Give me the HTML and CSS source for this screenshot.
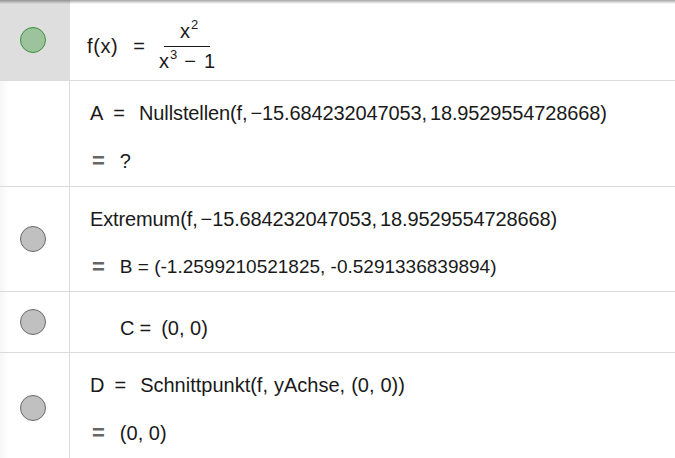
FILE: index.html
```html
<!DOCTYPE html>
<html lang="de">
<head>
<meta charset="utf-8">
<title>Algebra</title>
<link rel="stylesheet" href="styles.css">
</head>
<body>
<div class="panel">
  <div class="row row1 selected">
    <div class="marble-cell"><span class="marble green"></span></div>
    <div class="content c-func">
      <span class="m">f(x)</span><span class="eq">=</span>
      <span class="frac">
        <span class="num">x<sup>2</sup></span>
        <span class="den">x<sup>3</sup><span class="minus">−</span>1</span>
      </span>
    </div>
  </div>
  <div class="row row2">
    <div class="marble-cell"></div>
    <div class="content two">
      <div class="line"><span>A</span><span class="eq">=</span><span class="tight">Nullstellen(f,<span class="thin"></span>−15.684232047053,<span class="thin"></span>18.9529554728668)</span></div>
      <div class="line"><span class="out-eq">=</span><span>?</span></div>
    </div>
  </div>
  <div class="row row3">
    <div class="marble-cell"><span class="marble gray"></span></div>
    <div class="content two">
      <div class="line"><span class="tight">Extremum(f,<span class="thin"></span>−15.684232047053,<span class="thin"></span>18.9529554728668)</span></div>
      <div class="line"><span class="out-eq">=</span><span class="out-num">B = (-1.2599210521825, -0.5291336839894)</span></div>
    </div>
  </div>
  <div class="row row4">
    <div class="marble-cell"><span class="marble gray"></span></div>
    <div class="content one">
      <div class="line indent"><span>C</span><span class="eq-text">=</span><span>(0, 0)</span></div>
    </div>
  </div>
  <div class="row row5">
    <div class="marble-cell"><span class="marble gray"></span></div>
    <div class="content two">
      <div class="line"><span>D</span><span class="eq">=</span><span>Schnittpunkt(f,<span class="thin wide"></span>yAchse,<span class="thin wide"></span>(0,<span class="thin wide"></span>0))</span></div>
      <div class="line"><span class="out-eq">=</span><span>(0, 0)</span></div>
    </div>
  </div>
</div>
</body>
</html>
```

FILE: styles.css
```css
* { box-sizing: border-box; }
html, body {
  margin: 0;
  padding: 0;
  background: #fff;
}
body {
  font-family: "Liberation Sans", Arial, sans-serif;
  font-size: 20px;
  color: #1a1a1a;
  width: 675px;
  height: 458px;
  overflow: hidden;
}
.panel {
  position: relative;
  display: flex;
  flex-direction: column;
}
.panel::before {
  content: "";
  position: absolute;
  left: 0;
  right: 0;
  top: 0;
  height: 4px;
  background: linear-gradient(to bottom, rgba(0,0,0,0.35), rgba(0,0,0,0));
  z-index: 2;
}
.row {
  display: flex;
  border-bottom: 1px solid #dcdcdc;
}
.row1 { height: 81px; }
.row2 { height: 106px; }
.row3 { height: 105px; }
.row4 { height: 61px; }
.row5 { height: 110px; border-bottom: none; }
.marble-cell {
  width: 70px;
  flex: none;
  border-right: 1px solid #dcdcdc;
  display: flex;
  align-items: center;
  padding-left: 20px;
  background: linear-gradient(to right, #f6f6f6, #fff 8px);
}
.selected .marble-cell {
  background: #dedede;
  border-right-color: #dedede;
}
.marble {
  width: 26px;
  height: 26px;
  border-radius: 50%;
  display: block;
}
.marble.green {
  background: #9dc39d;
  border: 1.5px solid #3d8f3d;
}
.marble.gray {
  background: #c0c0c0;
  border: 1.5px solid #6a6a6a;
}
.content {
  flex: 1;
  padding-left: 20px;
  display: flex;
}
.c-func {
  align-items: center;
  padding-top: 12px;
  padding-left: 17px;
}
.c-func .m { letter-spacing: 0.6px; }
.two {
  flex-direction: column;
  padding-top: 20px;
  gap: 24px;
}
.one {
  flex-direction: column;
  padding-top: 24px;
}
.line {
  height: 24px;
  line-height: 24px;
  display: flex;
  align-items: center;
  white-space: nowrap;
}
.indent { padding-left: 30px; }
.eq {
  margin: 0 14px 0 10px;
}
.c-func .eq { margin: 0 13px 0 15px; }
.eq-text { margin: 0 10px 0 5px; }
.thin {
  display: inline-block;
  width: 3px;
}
.thin.wide { width: 6px; }
.tight { letter-spacing: -0.12px; }
.out-eq {
  color: #666;
  font-weight: bold;
  font-size: 22px;
  margin-left: 2px;
  margin-right: 15px;
}
.out-num { font-size: 19px; }
.frac {
  display: inline-flex;
  flex-direction: column;
  align-items: center;
}
.num {
  display: block;
  line-height: 24px;
  height: 28px;
  border-bottom: 1px solid #1a1a1a;
  padding: 0 12px 4px 16px;
}
.den {
  display: block;
  line-height: 24px;
  height: 26px;
  padding: 2px 1px 0;
}
sup {
  font-size: 13px;
  vertical-align: 0;
  position: relative;
  top: -9px;
  line-height: 0;
  margin-left: 1px;
}
.minus { margin: 0 8px 0 7px; }
```
